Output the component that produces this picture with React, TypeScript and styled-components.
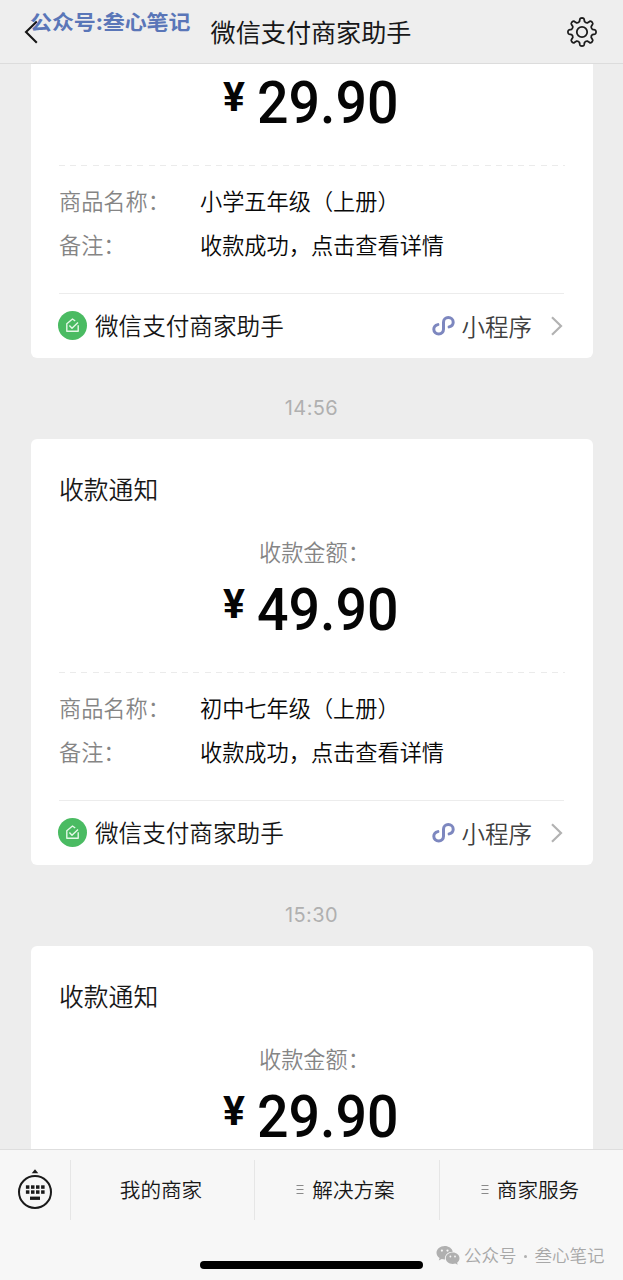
import React from "react";
import styled, { createGlobalStyle } from "styled-components";

const GlobalStyle = createGlobalStyle`
  *, *::before, *::after { box-sizing: border-box; }
  html, body { margin: 0; padding: 0; background: #ededed; }
  body { font-family: "Noto Sans CJK SC", "Liberation Sans", sans-serif; font-weight: 350; color: #181818; }
`;

const Screen = styled.div`
  display: flex;
  flex-direction: column;
  width: 623px;
  height: 1280px;
  overflow: hidden;
  background: #ededed;
`;

const Header = styled.header`
  position: relative;
  flex: none;
  display: flex;
  align-items: center;
  justify-content: space-between;
  height: 64px;
  padding: 0 25px 0 24px;
  background: #eeeeee;
  border-bottom: 1px solid #dcdcdc;
`;

const HeaderTitle = styled.h1`
  margin: 0 0 2px 18px;
  font-size: 25.1px;
  line-height: 36px;
  font-weight: 400;
  white-space: nowrap;
`;

const HeaderMark = styled.span`
  position: absolute;
  left: 30px;
  top: 5px;
  font-size: 22px;
  line-height: 32px;
  font-weight: 700;
  letter-spacing: -0.1px;
  color: #5a76b8;
  white-space: nowrap;
  transform: scaleY(0.92);
`;

const Messages = styled.main`
  flex: 1;
  min-height: 0;
  overflow: hidden;
`;

const Thread = styled.div`
  margin-top: -132px;
  padding: 0 31px;
`;

const Card = styled.article`
  height: 426px;
  width: 562px;
  padding: 0 28px;
  border-radius: 6px;
  background: #fff;
  display: flex;
  flex-direction: column;
`;

const CardTitle = styled.h2`
  margin: 31px 0 0;
  font-size: 24.8px;
  line-height: 36px;
  font-weight: 350;
`;

const AmountLabel = styled.div`
  margin-top: 29px;
  padding-left: 200px;
  font-size: 22.2px;
  line-height: 32px;
  color: #858585;
`;

const Amount = styled.div`
  display: flex;
  align-items: flex-start;
  height: 60px;
  margin-top: 13px;
  padding-left: 164px;
  font-family: Roboto, "Liberation Sans", sans-serif;
  font-weight: 500;
  color: #050505;
`;

const Currency = styled.span`
  width: 34px;
  padding-top: 3px;
  font-size: 41px;
  line-height: 42px;
  font-weight: 700;
`;

const Digits = styled.span`
  font-size: 59px;
  line-height: 60px;
  transform: scaleX(0.94);
  transform-origin: left center;
`;

const Details = styled.dl`
  display: flex;
  flex-direction: column;
  gap: 12px;
  height: 128px;
  margin: 32px 0 0;
  padding-top: 19px;
  background: repeating-linear-gradient(90deg, #ebebeb 0 6px, transparent 6px 11.2px) top left / 506px 1px no-repeat;
`;

const DetailRow = styled.div`
  display: flex;
  font-size: 22.2px;
  line-height: 32px;
  white-space: nowrap;
`;

const DetailKey = styled.dt`
  width: 141px;
  color: #858585;
`;

const DetailValue = styled.dd`
  margin: 0;
  color: #080808;
`;

const CardFooter = styled.footer`
  display: flex;
  align-items: center;
  width: 505px;
  height: 65px;
  padding-bottom: 1px;
  border-top: 1px solid #ececec;
`;

const SourceName = styled.span`
  margin: 0 0 2px 8px;
  font-size: 23.6px;
  line-height: 34px;
  color: #151515;
`;

const MiniLabel = styled.span`
  margin: 0 18px 0 7px;
  font-size: 23.5px;
  line-height: 34px;
  color: #404040;
`;

const Spacer = styled.span`
  flex: 1;
`;

const Time = styled.time`
  display: flex;
  align-items: center;
  justify-content: center;
  height: 81px;
  padding-top: 18px;
  font-family: Inter, "Liberation Sans", sans-serif;
  font-size: 20px;
  font-weight: 400;
  letter-spacing: 0.4px;
  color: #b0b0b0;
`;

const BottomBar = styled.footer`
  flex: none;
  height: 131px;
  background: #f7f7f7;
  border-top: 1px solid #dedede;
`;

const Tabs = styled.nav`
  display: grid;
  grid-template-columns: 70px 184px 185px 184px;
  height: 82px;
  padding: 10px 0 12px;
`;

const Tab = styled.div`
  display: flex;
  align-items: center;
  justify-content: center;
  gap: 8px;
  padding: 0 3px 2px 0;
  border-left: 1px solid #e6e6e6;
  font-size: 20.6px;
  line-height: 30px;
  white-space: nowrap;
`;

const KeyboardButton = styled.div`
  display: flex;
  align-items: center;
  justify-content: center;
`;

const BottomRow = styled.div`
  display: flex;
  align-items: flex-start;
  height: 48px;
  padding-left: 200px;
`;

const HomeIndicator = styled.div`
  width: 223px;
  height: 8px;
  margin-top: 29px;
  border-radius: 4px;
  background: #000;
`;

const AccountMark = styled.div`
  display: flex;
  align-items: center;
  margin: 9px 0 0 13px;
  height: 28px;
  font-size: 17.5px;
  color: #a8a8a8;
  white-space: nowrap;
`;

const AccountText = styled.span`
  margin-bottom: 2px;
`;

const Dot = styled.span`
  width: 3px;
  height: 3px;
  margin: 2px 8px 0 7px;
  border-radius: 50%;
  background: #b0b0b0;
`;

const BackIcon = () => (
  <svg width="14" height="24" viewBox="0 0 14 24" fill="none" stroke="#161616" strokeWidth="2.1">
    <path d="M12.8 1.5 2 12 12.8 22.8" />
  </svg>
);

const gearPath = (() => {
  const pts: string[] = [];
  for (let i = 0; i < 8; i++) {
    const a = (i * Math.PI) / 4 - Math.PI / 2;
    const at = (r: number, d: number) =>
      `${(16 + r * Math.cos(a + d)).toFixed(2)} ${(16 + r * Math.sin(a + d)).toFixed(2)}`;
    pts.push(`${i ? "L" : "M"}${at(10.8, -0.24)}`);
    pts.push(`L${at(13.1, -0.16)}`);
    pts.push(`Q${at(14.1, -0.13)} ${at(14.1, 0)}`);
    pts.push(`Q${at(14.1, 0.13)} ${at(13.1, 0.16)}`);
    pts.push(`L${at(10.8, 0.24)}`);
    pts.push(`Q${at(9.6, Math.PI / 8)} ${at(10.8, Math.PI / 4 - 0.24)}`);
  }
  return pts.join("") + "Z";
})();

const GearIcon = () => (
  <svg width="32" height="32" viewBox="0 0 32 32" fill="none" stroke="#1c1c1c" strokeWidth="1.8" strokeLinejoin="round">
    <path d={gearPath} />
    <circle cx="16" cy="16" r="5.2" />
  </svg>
);

const BadgeIcon = styled.svg`
  margin-left: -1px;
`;

const ShopBadge = () => (
  <BadgeIcon width="29" height="29" viewBox="0 0 29 29" fill="none">
    <circle cx="14.5" cy="14.5" r="14.5" fill="#4abb62" />
    <g stroke="#e4f8e7" strokeWidth="1.4" strokeLinejoin="round">
      <path d="M17.2 10 14.5 8 8.8 12.7V20.3H20.2V14.2" />
      <path d="M11.4 14.5 14 17.2 20 11.4" />
    </g>
  </BadgeIcon>
);

const MiniProgramIcon = () => (
  <svg width="23" height="22" viewBox="0 0 23 22" fill="none" stroke="#7d87bf" strokeWidth="3" strokeLinecap="round">
    <path d="M5.9 9.6C3.3 10.2 1.8 12.1 1.8 14.3C1.8 17 4 18.9 6.7 18.9C9.4 18.9 11.5 17.1 11.5 14.3V7.2C11.5 4.4 13.6 2.6 16.3 2.6C19 2.6 21.2 4.5 21.2 7.2C21.2 9.4 19.7 11.3 17.1 11.9" />
  </svg>
);

const ChevronIcon = () => (
  <svg width="14" height="20" viewBox="0 0 14 20" fill="none" stroke="#b2b2b2" strokeWidth="2.2">
    <path d="M2 1.2 11 10 2 18.8" />
  </svg>
);

const KeyboardIcon = () => (
  <svg width="36" height="42" viewBox="0 0 36 42" fill="#1a1a1a">
    <path d="M18 0.3 21.3 4.2H14.7Z" />
    <circle cx="18" cy="23" r="16" fill="none" stroke="#1a1a1a" strokeWidth="2" />
    {[16.3, 21.3].map((y) =>
      [8.9, 14, 19, 24.1].map((x) => <rect key={`${x}-${y}`} x={x} y={y} width="3.5" height="3.5" />)
    )}
    <rect x="13" y="27.6" width="10" height="3.3" />
  </svg>
);

const MenuIcon = () => (
  <svg width="8" height="10" viewBox="0 0 8 10" stroke="#8a8a8a" strokeWidth="1">
    <path d="M0.5 1.5H7.5M0.5 5.5H7.5M0.5 9.5H7.5" />
  </svg>
);

const ChatIcon = styled.svg`
  margin-right: 4px;
`;

const ChatBubblesIcon = () => (
  <ChatIcon width="24" height="20" viewBox="0 0 24 20" fill="#b0b0b0">
    <path d="M8.7 1C4.1 1 .5 4 .5 7.8C.5 10 1.7 11.8 3.6 13L2.8 15.4L5.7 14C6.7 14.3 7.8 14.5 9 14.5C8.2 10.2 11.8 6.7 16.8 6.7C16 3.3 12.8 1 8.7 1Z" />
    <path d="M16.7 7.6C12.7 7.6 9.8 10.2 9.8 13.3C9.8 16.5 12.8 19 16.7 19C17.6 19 18.5 18.9 19.3 18.6L21.7 19.7L21.1 17.7C22.6 16.7 23.5 15.1 23.5 13.3C23.5 10.2 20.6 7.6 16.7 7.6Z" />
    <g fill="#f7f7f7">
      <circle cx="5.9" cy="5.6" r="1.1" />
      <circle cx="11.5" cy="5.6" r="1.1" />
      <circle cx="14.4" cy="11.5" r="0.9" />
      <circle cx="19" cy="11.5" r="0.9" />
    </g>
  </ChatIcon>
);

interface Notice {
  amount: string;
  product: string;
  nextTime?: string;
}

const notices: Notice[] = [
  { amount: "29.90", product: "小学五年级（上册）", nextTime: "14:56" },
  { amount: "49.90", product: "初中七年级（上册）", nextTime: "15:30" },
  { amount: "29.90", product: "小学五年级（上册）" },
];

const PaymentCard = ({ amount, product }: Notice) => (
  <Card>
    <CardTitle>收款通知</CardTitle>
    <AmountLabel>收款金额：</AmountLabel>
    <Amount>
      <Currency>¥</Currency>
      <Digits>{amount}</Digits>
    </Amount>
    <Details>
      <DetailRow>
        <DetailKey>商品名称：</DetailKey>
        <DetailValue>{product}</DetailValue>
      </DetailRow>
      <DetailRow>
        <DetailKey>备注：</DetailKey>
        <DetailValue>收款成功，点击查看详情</DetailValue>
      </DetailRow>
    </Details>
    <CardFooter>
      <ShopBadge />
      <SourceName>微信支付商家助手</SourceName>
      <Spacer />
      <MiniProgramIcon />
      <MiniLabel>小程序</MiniLabel>
      <ChevronIcon />
    </CardFooter>
  </Card>
);

export default function App() {
  return (
    <Screen>
      <GlobalStyle />
      <Header>
        <BackIcon />
        <HeaderTitle>微信支付商家助手</HeaderTitle>
        <GearIcon />
        <HeaderMark>公众号:叁心笔记</HeaderMark>
      </Header>
      <Messages>
        <Thread>
          {notices.map((n, i) => (
            <React.Fragment key={i}>
              <PaymentCard {...n} />
              {n.nextTime && <Time>{n.nextTime}</Time>}
            </React.Fragment>
          ))}
        </Thread>
      </Messages>
      <BottomBar>
        <Tabs>
          <KeyboardButton>
            <KeyboardIcon />
          </KeyboardButton>
          <Tab>我的商家</Tab>
          <Tab>
            <MenuIcon />
            解决方案
          </Tab>
          <Tab>
            <MenuIcon />
            商家服务
          </Tab>
        </Tabs>
        <BottomRow>
          <HomeIndicator />
          <AccountMark>
            <ChatBubblesIcon />
            <AccountText>公众号</AccountText>
            <Dot />
            <AccountText>叁心笔记</AccountText>
          </AccountMark>
        </BottomRow>
      </BottomBar>
    </Screen>
  );
}
